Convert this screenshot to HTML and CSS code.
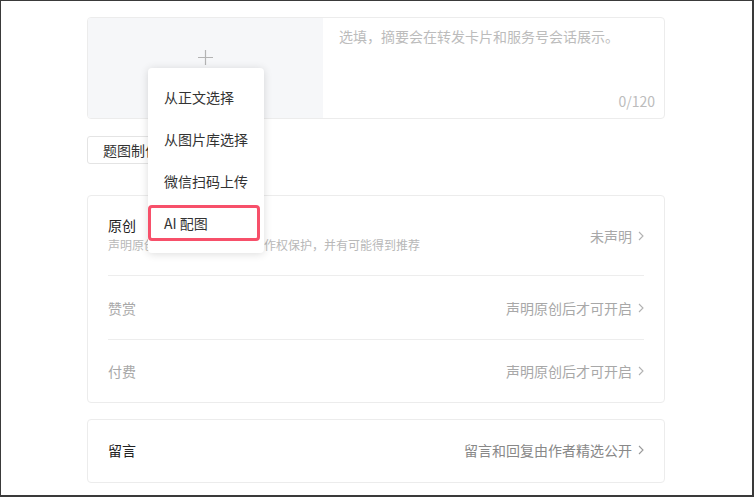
FILE: index.html
```html
<!DOCTYPE html>
<html lang="zh">
<head>
<meta charset="utf-8">
<link rel="stylesheet" href="styles.css">
</head>
<body>
<div class="frame">
  <div class="content">
    <div class="cover-card">
      <div class="cover-pick">
        <svg class="plus" width="15" height="15" viewBox="0 0 15 15"><path d="M7.5 0V15M0 7.5H15" stroke="#b4b4b4" stroke-width="1.2" fill="none"/></svg>
      </div>
      <div class="digest">
        <div class="placeholder">选填，摘要会在转发卡片和服务号会话展示。</div>
        <div class="counter">0/120</div>
      </div>
    </div>
    <div class="btn-row"><button class="btn">题图制作</button></div>
    <div class="card">
      <div class="row row-first">
        <div class="row-main">
          <div class="title">原创</div>
          <div class="desc">声明原创可获得原创标识和著作权保护，并有可能得到推荐</div>
        </div>
        <div class="value">未声明<svg class="chev" width="6" height="10" viewBox="0 0 6 10"><path d="M1 1L5 5L1 9" stroke="#b2b2b2" stroke-width="1.1" fill="none"/></svg></div>
      </div>
      <div class="row">
        <div class="title disabled">赞赏</div>
        <div class="value">声明原创后才可开启<svg class="chev" width="6" height="10" viewBox="0 0 6 10"><path d="M1 1L5 5L1 9" stroke="#b2b2b2" stroke-width="1.1" fill="none"/></svg></div>
      </div>
      <div class="row row-last">
        <div class="title disabled">付费</div>
        <div class="value">声明原创后才可开启<svg class="chev" width="6" height="10" viewBox="0 0 6 10"><path d="M1 1L5 5L1 9" stroke="#b2b2b2" stroke-width="1.1" fill="none"/></svg></div>
      </div>
    </div>
    <div class="card card-2">
      <div class="row row-last row-comment">
        <div class="title">留言</div>
        <div class="value dark">留言和回复由作者精选公开<svg class="chev" width="6" height="10" viewBox="0 0 6 10"><path d="M1 1L5 5L1 9" stroke="#9a9a9a" stroke-width="1.1" fill="none"/></svg></div>
      </div>
    </div>
  </div>
  <div class="menu">
    <div class="menu-item">从正文选择</div>
    <div class="menu-item">从图片库选择</div>
    <div class="menu-item">微信扫码上传</div>
    <div class="menu-item highlighted">AI 配图<span class="mark"></span></div>
  </div>
</div>
</body>
</html>
```
FILE: styles.css
```css
* { box-sizing: border-box; }
html, body { margin: 0; padding: 0; background: #fff; }
body {
  font-family: "Noto Sans CJK SC", "Noto Sans", sans-serif;
  font-size: 14px;
  color: #333;
}
.frame {
  position: relative;
  width: 754px;
  height: 497px;
  border-top: 1px solid #3a3a3a;
  border-left: 1px solid #3a3a3a;
  border-right: 2px solid #3a3a3a;
  border-bottom: 2px solid #3a3a3a;
  padding: 16px 0 0 86px;
  overflow: hidden;
}
.content { width: 578px; }
.cover-card {
  display: flex;
  height: 102px;
  border: 1px solid #ececec;
  border-radius: 4px;
  overflow: hidden;
}
.cover-pick {
  width: 235px;
  background: #f6f7f9;
  display: flex;
  justify-content: center;
  padding-top: 32px;
}
.plus { display: block; }
.digest {
  flex: 1;
  display: flex;
  flex-direction: column;
  justify-content: space-between;
  padding: 7px 9px 6px 16px;
}
.placeholder { color: #bcbcbc; line-height: 22px; font-size: 14px; }
.counter { color: #bcbcbc; text-align: right; line-height: 22px; font-size: 14px; }
.btn-row { margin-top: 17px; }
.btn {
  font-family: inherit;
  font-size: 14px;
  color: #333;
  background: #fff;
  border: 1px solid #e4e4e4;
  border-radius: 3px;
  height: 28px;
  padding: 0 15px;
  line-height: 26px;
}
.card {
  margin-top: 31px;
  border: 1px solid #ececec;
  border-radius: 4px;
  padding: 0 20px;
}
.card-2 { margin-top: 16px; }
.row {
  display: flex;
  align-items: center;
  justify-content: space-between;
  height: 64px;
  border-bottom: 1px solid #ededed;
}
.row-first { height: 80px; }
.row-last { border-bottom: none; height: 62px; }
.row-comment { padding-bottom: 3px; }
.row-first .row-main { margin-top: -4px; }
.title { line-height: 22px; font-size: 14px; color: #222; }
.title.disabled { color: #a8a8a8; }
.desc { font-size: 12px; line-height: 18px; color: #b8b8b8; }
.value {
  display: flex;
  align-items: center;
  color: #a8a8a8;
  font-size: 14px;
  line-height: 22px;
}
.value.dark { color: #888; }
.chev { margin-left: 6px; display: block; }
.menu {
  position: absolute;
  left: 147px;
  top: 67px;
  width: 116px;
  height: 185px;
  background: #fff;
  border-radius: 4px;
  box-shadow: 0 1px 8px rgba(0, 0, 0, 0.14);
  padding-top: 8px;
}
.menu-item {
  position: relative;
  height: 42px;
  line-height: 42px;
  padding-left: 16px;
  font-size: 14px;
  color: #333;
}
.mark {
  position: absolute;
  left: 0;
  right: 4px;
  top: 3px;
  bottom: 3px;
  border: 3px solid #f7506a;
  border-radius: 4px;
}
```
